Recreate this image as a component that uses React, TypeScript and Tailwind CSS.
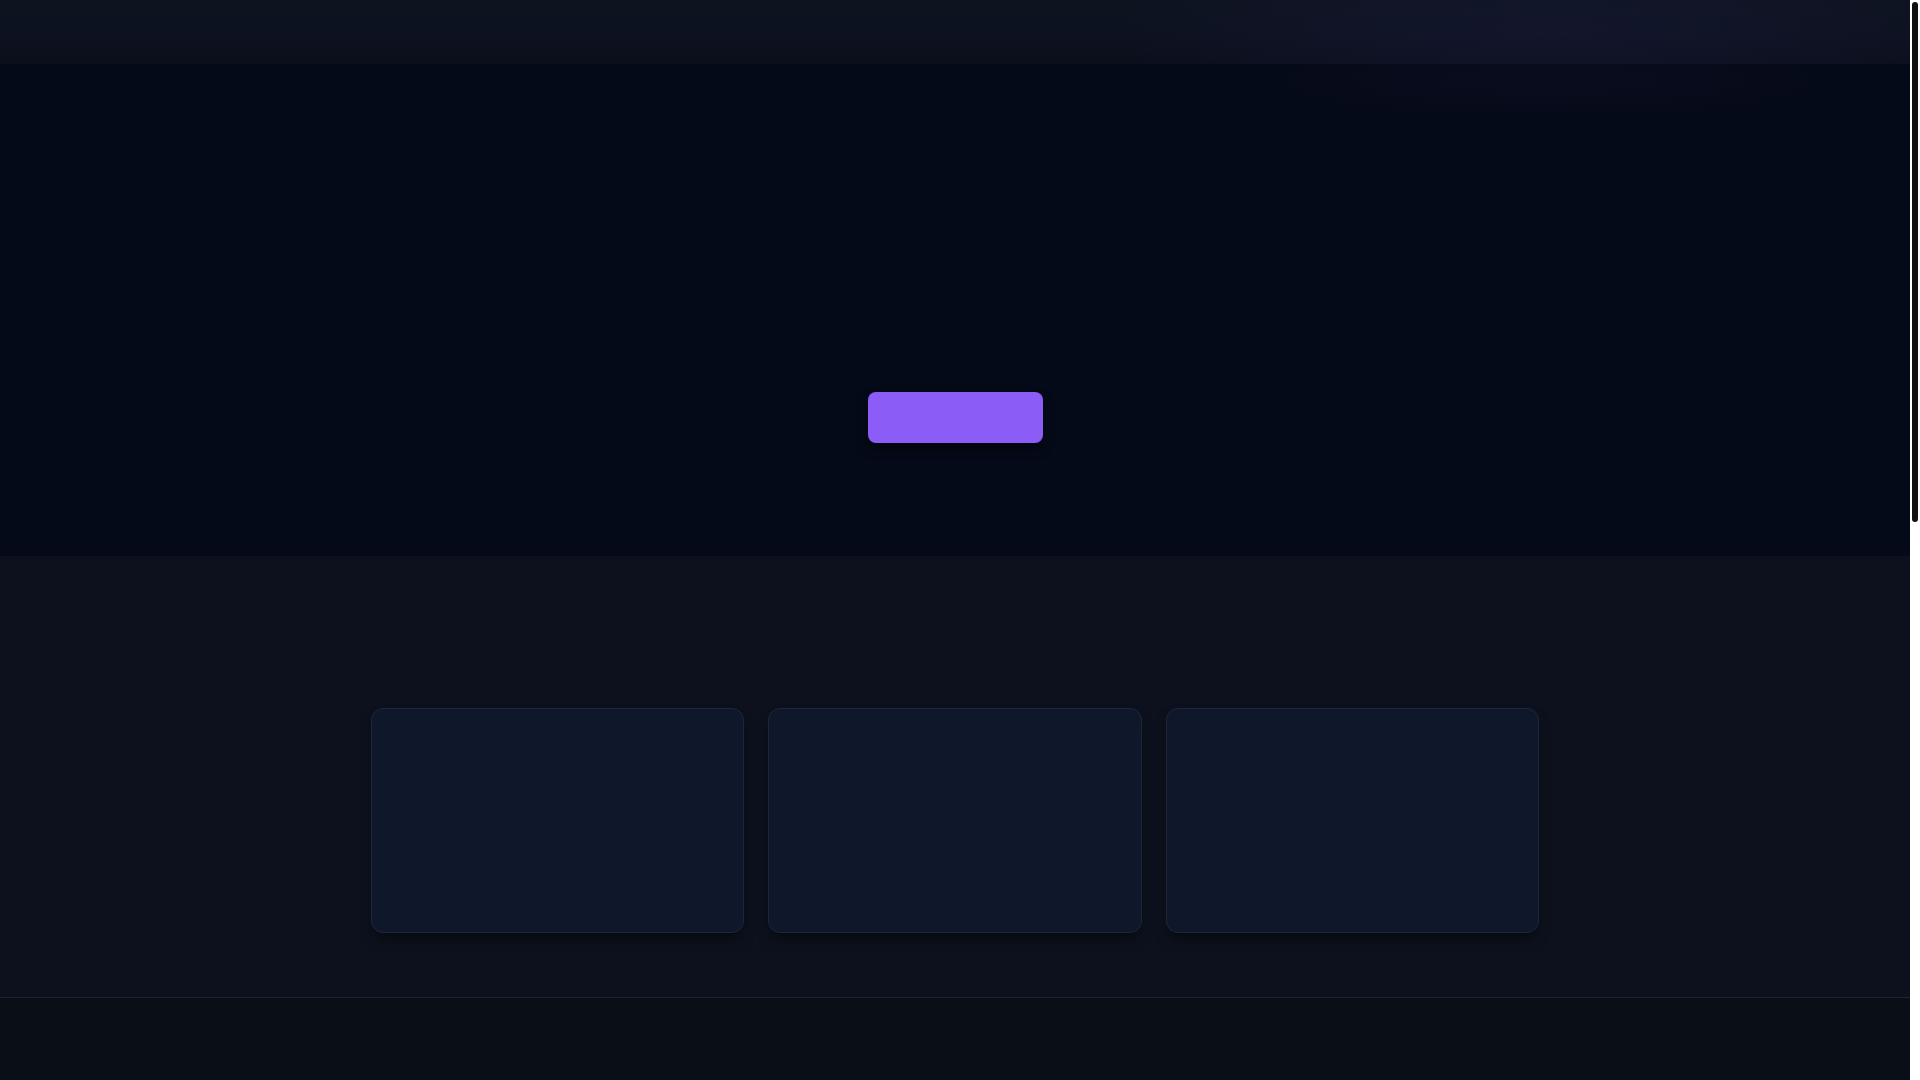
import React from "react";

function Card() {
  return (
    <div className="h-[225px] rounded-xl border border-[#1e2738] bg-[#0f172a] shadow-[0_8px_14px_-4px_rgba(0,0,0,0.55)]" />
  );
}

export default function App() {
  return (
    <div className="min-h-screen bg-[#050a18] pr-[10px] font-['Inter',sans-serif]">
      {/* hero with header */}
      <section className="relative overflow-hidden bg-[#050a18]">
        <div className="pointer-events-none absolute top-[40px] left-[1250px] h-[80px] w-[600px] rounded-full bg-[radial-gradient(ellipse_at_center,rgba(20,18,44,0.3),transparent_70%)]" />
        <header className="relative h-16 overflow-hidden bg-gradient-to-b from-[#0e1320] via-[#0d1220] to-[#0b0f1c]">
          <div className="pointer-events-none absolute -top-[70px] left-[1120px] h-[200px] w-[860px] rounded-full bg-[radial-gradient(ellipse_at_center,rgba(24,26,56,0.5),transparent_72%)]" />
        </header>
        <div className="relative flex h-[492px] flex-col items-center pt-[328px]">
          <button className="h-[51px] w-[175px] rounded-lg bg-[#8b5cf6] shadow-[0_6px_12px_-2px_rgba(0,0,0,0.6)]" />
        </div>
      </section>

      {/* features */}
      <section className="bg-[#0c111d] pt-[152px] pb-[64px]">
        <div className="mx-auto grid max-w-[1200px] grid-cols-3 gap-6 px-4">
          <Card />
          <Card />
          <Card />
        </div>
      </section>

      {/* footer */}
      <footer className="h-[1245px] border-t border-[#1c2431] bg-[#0a0e17]" />

      {/* scrollbar */}
      <div className="fixed top-0 right-0 h-screen w-[10px] bg-white px-[2px] pt-[2px]">
        <div className="h-[520px] w-full rounded-full bg-[#111111]" />
      </div>
    </div>
  );
}
